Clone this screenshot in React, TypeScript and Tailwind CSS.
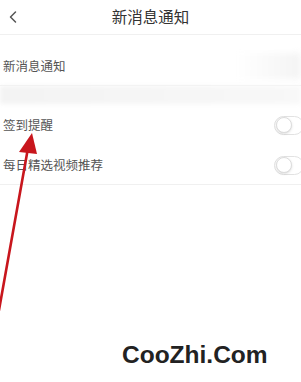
import { ChevronLeft } from "lucide-react";

function Toggle() {
    return (
        <div className="w-[30px] h-[19px] rounded-full border border-[#e2e2e2] bg-white flex items-center px-[1px] -mr-[3px]">
            <div className="w-[16px] h-[16px] rounded-full bg-white border border-[#dcdcdc] shadow-sm" />
        </div>
    );
}

export default function App() {
    const font = { fontFamily: '"Noto Sans CJK SC", "Noto Sans", sans-serif' };
    return (
        <div className="relative w-[301px] h-[382px] bg-white overflow-hidden" style={font}>
            <div className="h-[35px] flex items-center justify-center relative border-b border-[#f0f0f0]">
                <ChevronLeft className="absolute left-[3px] top-[7px] w-[20px] h-[20px] text-[#555]" strokeWidth={1.8} />
                <span className="text-[15.5px] text-[#333]">新消息通知</span>
            </div>

            <div className="h-[51px] pt-[12px] flex items-center justify-between pl-[3px] border-b border-[#f2f2f2]">
                <span className="text-[12.5px] text-[#555]">新消息通知</span>
                <div className="w-[65px] h-[26px] bg-gradient-to-r from-white to-[#f4f4f4] blur-[3px]" />
            </div>

            <div className="h-[18px] bg-gradient-to-r from-[#f3f3f3] to-[#f8f8f8] blur-[2px]" />

            <div className="h-[42px] flex items-center justify-between pl-[3px]">
                <span className="text-[12.5px] text-[#555]">签到提醒</span>
                <Toggle />
            </div>

            <div className="h-[39px] flex items-center justify-between pl-[3px] border-b border-[#f0f0f0]">
                <span className="text-[12.5px] text-[#555]">每日精选视频推荐</span>
                <Toggle />
            </div>

            <svg className="absolute left-0 top-0" width="301" height="382" viewBox="0 0 301 382">
                <line x1="-1" y1="310" x2="28" y2="148" stroke="#c8161d" strokeWidth="2.6" strokeLinecap="round" />
                <polygon points="32,133 19,152 37,154" fill="#c8161d" />
            </svg>

            <div className="absolute left-[118px] top-[337px] px-[4px] bg-white/90">
                <span className="text-[24.5px] font-bold text-[#222]" style={{ fontFamily: '"Liberation Sans", Arial, sans-serif' }}>CooZhi.Com</span>
            </div>
        </div>
    );
}
